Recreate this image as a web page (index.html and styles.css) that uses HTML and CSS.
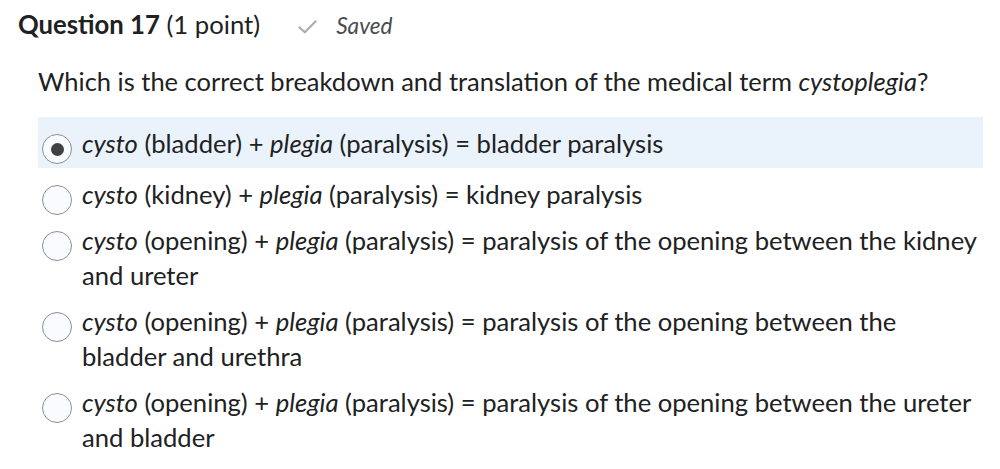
FILE: index.html
```html
<!DOCTYPE html>
<html lang="en">
<head>
<meta charset="utf-8">
<title>Question 17</title>
<link rel="stylesheet" href="styles.css">
</head>
<body>
<div class="page">
  <div class="header">
    <h2 class="qtitle"><strong>Question 17</strong> <span class="pts">(1 point)</span></h2>
    <span class="saved">
      <svg class="check" width="19" height="14" viewBox="0 0 19 14" aria-hidden="true"><path d="M1.5 7.5 L6.8 12.3 L17.5 1.5" fill="none" stroke="#a9adb2" stroke-width="2.2" stroke-linecap="round" stroke-linejoin="round"/></svg>
      <em>Saved</em>
    </span>
  </div>
  <p class="prompt">Which is the correct breakdown and translation of the medical term <em>cystoplegia</em>?</p>
  <div class="options">
    <label class="opt selected"><span class="radio"><span class="dot"></span></span><span class="text"><em>cysto</em> (bladder) + <em>plegia</em> (paralysis) = bladder paralysis</span></label>
    <label class="opt"><span class="radio"></span><span class="text"><em>cysto</em> (kidney) + <em>plegia</em> (paralysis) = kidney paralysis</span></label>
    <label class="opt"><span class="radio"></span><span class="text"><em>cysto</em> (opening) + <em>plegia</em> (paralysis) = paralysis of the opening between the kidney and ureter</span></label>
    <label class="opt"><span class="radio"></span><span class="text"><em>cysto</em> (opening) + <em>plegia</em> (paralysis) = paralysis of the opening between the bladder and urethra</span></label>
    <label class="opt"><span class="radio"></span><span class="text"><em>cysto</em> (opening) + <em>plegia</em> (paralysis) = paralysis of the opening between the ureter and bladder</span></label>
  </div>
</div>
</body>
</html>
```
FILE: styles.css
```css
html, body {
  margin: 0;
  padding: 0;
  background: #ffffff;
}
body {
  font-family: Lato, "Noto Sans", sans-serif;
  color: #202122;
}
.page {
  padding: 9px 17px 0 18px;
}
.header {
  display: flex;
  align-items: baseline;
  height: 30px;
}
.qtitle {
  margin: 0;
  font-size: 25.7px;
  line-height: 30px;
  font-weight: 400;
  color: #202122;
}
.qtitle strong {
  font-weight: 700;
}
.saved {
  display: flex;
  align-items: baseline;
  gap: 19px;
  margin-left: 38px;
  font-size: 22.6px;
  line-height: 30px;
  color: #494c4e;
}
.check {
  align-self: center;
  position: relative;
  top: 1px;
}
.prompt {
  margin: 27px 0 0 20px;
  font-size: 25.5px;
  line-height: 30px;
}
.options {
  margin: 21px 0 0 20px;
  display: flex;
  flex-direction: column;
}
.opt {
  display: flex;
  align-items: flex-start;
  gap: 10px;
  padding: 9px 0 3px 4px;
  font-size: 25.6px;
  line-height: 34.5px;
}
.opt.selected {
  padding-top: 9px;
  padding-bottom: 7px;
  background: #eaf2fc;
}
.radio {
  flex: none;
  width: 30px;
  height: 30px;
  margin: 8px 0 -8px;
  box-sizing: border-box;
  border: 1.5px solid #8a8f94;
  border-radius: 50%;
  background: #f9fbff;
  display: flex;
  align-items: center;
  justify-content: center;
}
.dot {
  width: 13px;
  height: 13px;
  border-radius: 50%;
  background: #3f4245;
}
.text {
  flex: 1;
}
```
